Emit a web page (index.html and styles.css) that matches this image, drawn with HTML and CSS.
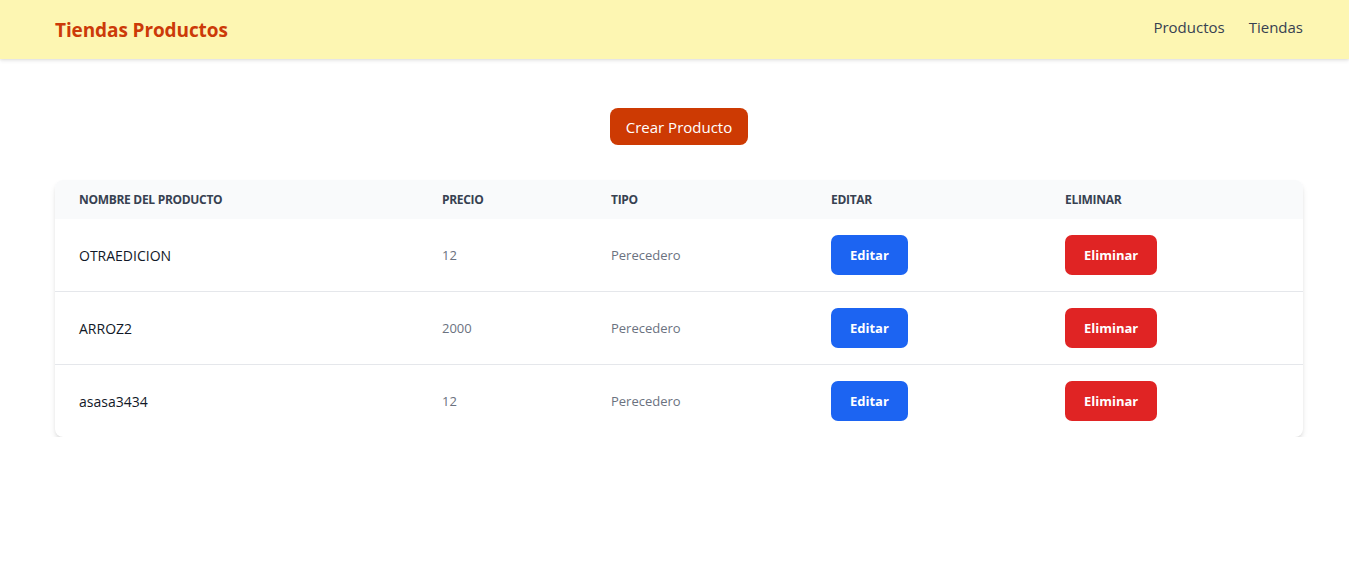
FILE: index.html
```html
<!DOCTYPE html>
<html lang="es">
<head>
<meta charset="utf-8">
<title>Tiendas Productos</title>
<link rel="stylesheet" href="styles.css">
</head>
<body>
<header class="navbar">
  <a class="brand" href="#">Tiendas Productos</a>
  <nav class="nav-links">
    <a href="#">Productos</a>
    <a href="#">Tiendas</a>
  </nav>
</header>
<main class="content">
  <div class="actions">
    <button class="btn-create">Crear Producto</button>
  </div>
  <div class="card">
    <table class="products">
      <colgroup>
        <col class="c1"><col class="c2"><col class="c3"><col class="c4"><col class="c5">
      </colgroup>
      <thead>
        <tr>
          <th>Nombre del producto</th>
          <th>Precio</th>
          <th>Tipo</th>
          <th>Editar</th>
          <th>Eliminar</th>
        </tr>
      </thead>
      <tbody>
        <tr>
          <td class="name">OTRAEDICION</td>
          <td>12</td>
          <td>Perecedero</td>
          <td><button class="btn btn-edit">Editar</button></td>
          <td><button class="btn btn-delete">Eliminar</button></td>
        </tr>
        <tr>
          <td class="name">ARROZ2</td>
          <td>2000</td>
          <td>Perecedero</td>
          <td><button class="btn btn-edit">Editar</button></td>
          <td><button class="btn btn-delete">Eliminar</button></td>
        </tr>
        <tr>
          <td class="name">asasa3434</td>
          <td>12</td>
          <td>Perecedero</td>
          <td><button class="btn btn-edit">Editar</button></td>
          <td><button class="btn btn-delete">Eliminar</button></td>
        </tr>
      </tbody>
    </table>
  </div>
</main>
</body>
</html>
```
FILE: styles.css
```css
* { box-sizing: border-box; }
html, body {
  margin: 0;
  padding: 0;
  background: #ffffff;
  font-family: "Open Sans", "Noto Sans", "Liberation Sans", sans-serif;
  color: #111827;
}
.navbar {
  height: 59px;
  background: #fdf6b2;
  box-shadow: 0 2px 4px rgba(0,0,0,0.08), 0 1px 2px rgba(0,0,0,0.06);
  display: flex;
  align-items: center;
  justify-content: space-between;
  padding: 0 46px 0 55px;
}
.brand {
  color: #cc3a08;
  font-size: 19px;
  font-weight: 700;
  text-decoration: none;
  letter-spacing: -0.1px;
  padding-top: 1px;
}
.nav-links {
  display: flex;
  gap: 24px;
  padding-bottom: 5px;
}
.nav-links a {
  color: #374151;
  font-size: 15px;
  text-decoration: none;
}
.content {
  padding: 49px 46px 0 55px;
}
.actions {
  display: flex;
  justify-content: center;
  margin-bottom: 35px;
}
.btn-create {
  background: #cd3a03;
  color: #ffffff;
  border: none;
  border-radius: 8px;
  height: 37px;
  padding: 0 16px;
  font-family: inherit;
  font-size: 15px;
  cursor: pointer;
}
.card {
  background: #ffffff;
  border-radius: 8px;
  box-shadow: 0 4px 6px -1px rgba(0,0,0,0.12), 0 2px 4px -2px rgba(0,0,0,0.12);
  overflow: hidden;
}
.products {
  width: 100%;
  border-collapse: separate;
  border-spacing: 0;
  table-layout: fixed;
}
.c1 { width: 363px; }
.c2 { width: 169px; }
.c3 { width: 220px; }
.c4 { width: 234px; }
.c5 { width: 262px; }
.products thead tr {
  background: #f9fafb;
}
.products th {
  height: 39px;
  padding: 0 24px;
  text-align: left;
  font-size: 12px;
  font-weight: 700;
  text-transform: uppercase;
  color: #374151;
  letter-spacing: -0.3px;
}
.products td {
  padding: 16px 24px;
  font-size: 13px;
  color: #6b7280;
  vertical-align: middle;
}
.products tbody tr + tr td {
  border-top: 1px solid #e5e7eb;
}
.products td.name {
  color: #111827;
  font-size: 14px;
  font-weight: 500;
}
.btn {
  display: block;
  border: none;
  border-radius: 7px;
  height: 40px;
  padding: 0 19px;
  color: #ffffff;
  font-family: inherit;
  font-size: 13px;
  font-weight: 700;
  cursor: pointer;
}
.btn-edit { background: #1c64f2; }
.btn-delete { background: #e02424; }
```
